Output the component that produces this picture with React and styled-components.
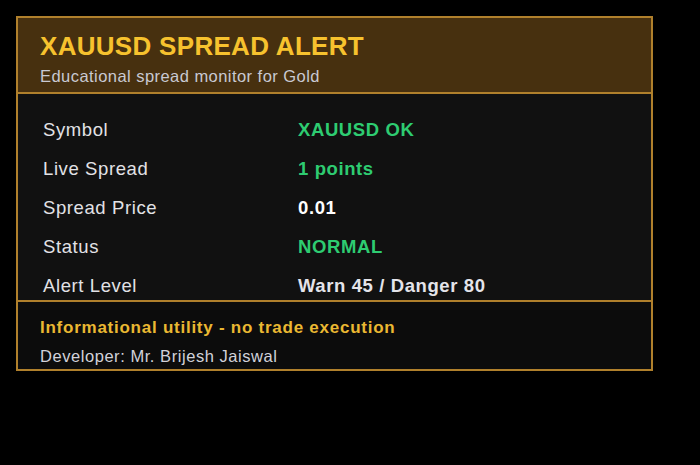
import styled, { createGlobalStyle } from 'styled-components';

const GlobalStyle = createGlobalStyle`
  html, body {
    margin: 0;
    background: #000;
  }
  body {
    font-family: "Liberation Sans", Arial, sans-serif;
  }
`;

const rows = [
  { label: 'Symbol', value: 'XAUUSD OK', tone: 'green' },
  { label: 'Live Spread', value: '1 points', tone: 'green' },
  { label: 'Spread Price', value: '0.01', tone: 'white' },
  { label: 'Status', value: 'NORMAL', tone: 'green' },
  { label: 'Alert Level', value: 'Warn 45 / Danger 80', tone: 'light' },
];

const App = () => (
  <>
    <GlobalStyle />
    <Page>
      <Panel>
        <Header>
          <Title>XAUUSD SPREAD ALERT</Title>
          <Subtitle>Educational spread monitor for Gold</Subtitle>
        </Header>
        <Body>
          {rows.map((row) => (
            <Row key={row.label}>
              <Label>{row.label}</Label>
              <Value $tone={row.tone}>{row.value}</Value>
            </Row>
          ))}
        </Body>
        <Footer>
          <Notice>Informational utility - no trade execution</Notice>
          <Developer>Developer: Mr. Brijesh Jaiswal</Developer>
        </Footer>
      </Panel>
    </Page>
  </>
);

const Page = styled.div`
  width: 700px;
  height: 465px;
  padding: 16px 0 0 16px;
  box-sizing: border-box;
  background: #000;
`;

const Panel = styled.div`
  width: 637px;
  border: 2px solid #b0802c;
  box-sizing: border-box;
  display: flex;
  flex-direction: column;
`;

const Header = styled.div`
  height: 76px;
  flex-shrink: 0;
  background: #47300f;
  border-bottom: 2px solid #b0802c;
  padding: 13px 0 0 22px;
  box-sizing: border-box;
  display: flex;
  flex-direction: column;
`;

const Title = styled.div`
  font-size: 26px;
  letter-spacing: 0.3px;
  font-weight: bold;
  color: #f7c22e;
  line-height: 30px;
`;

const Subtitle = styled.div`
  margin-top: 5px;
  font-size: 16.5px;
  letter-spacing: 0.45px;
  color: #c9c9d2;
  line-height: 20px;
`;

const Body = styled.div`
  height: 206px;
  flex-shrink: 0;
  background: #111111;
  overflow: hidden;
  padding: 25px 0 0 25px;
  box-sizing: border-box;
  display: flex;
  flex-direction: column;
`;

const Row = styled.div`
  display: grid;
  grid-template-columns: 255px 1fr;
  height: 39px;
  flex-shrink: 0;
  align-items: start;
  font-size: 18.5px;
  letter-spacing: 0.6px;
  line-height: 22px;
`;

const Label = styled.div`
  color: #e2e2e6;
`;

const toneColor = {
  green: '#2ecc71',
  white: '#ffffff',
  light: '#e4e4ea',
};

const Value = styled.div`
  color: ${({ $tone }) => toneColor[$tone]};
  font-weight: bold;
`;

const Footer = styled.div`
  height: 69px;
  flex-shrink: 0;
  border-top: 2px solid #b0802c;
  background: #0c0c0c;
  padding: 16px 0 0 22px;
  box-sizing: border-box;
  display: flex;
  flex-direction: column;
`;

const Notice = styled.div`
  font-size: 17px;
  letter-spacing: 0.75px;
  font-weight: bold;
  color: #eab832;
  line-height: 20px;
`;

const Developer = styled.div`
  margin-top: 8px;
  font-size: 16.5px;
  letter-spacing: 0.55px;
  color: #d2d2da;
  line-height: 20px;
`;

export default App;
